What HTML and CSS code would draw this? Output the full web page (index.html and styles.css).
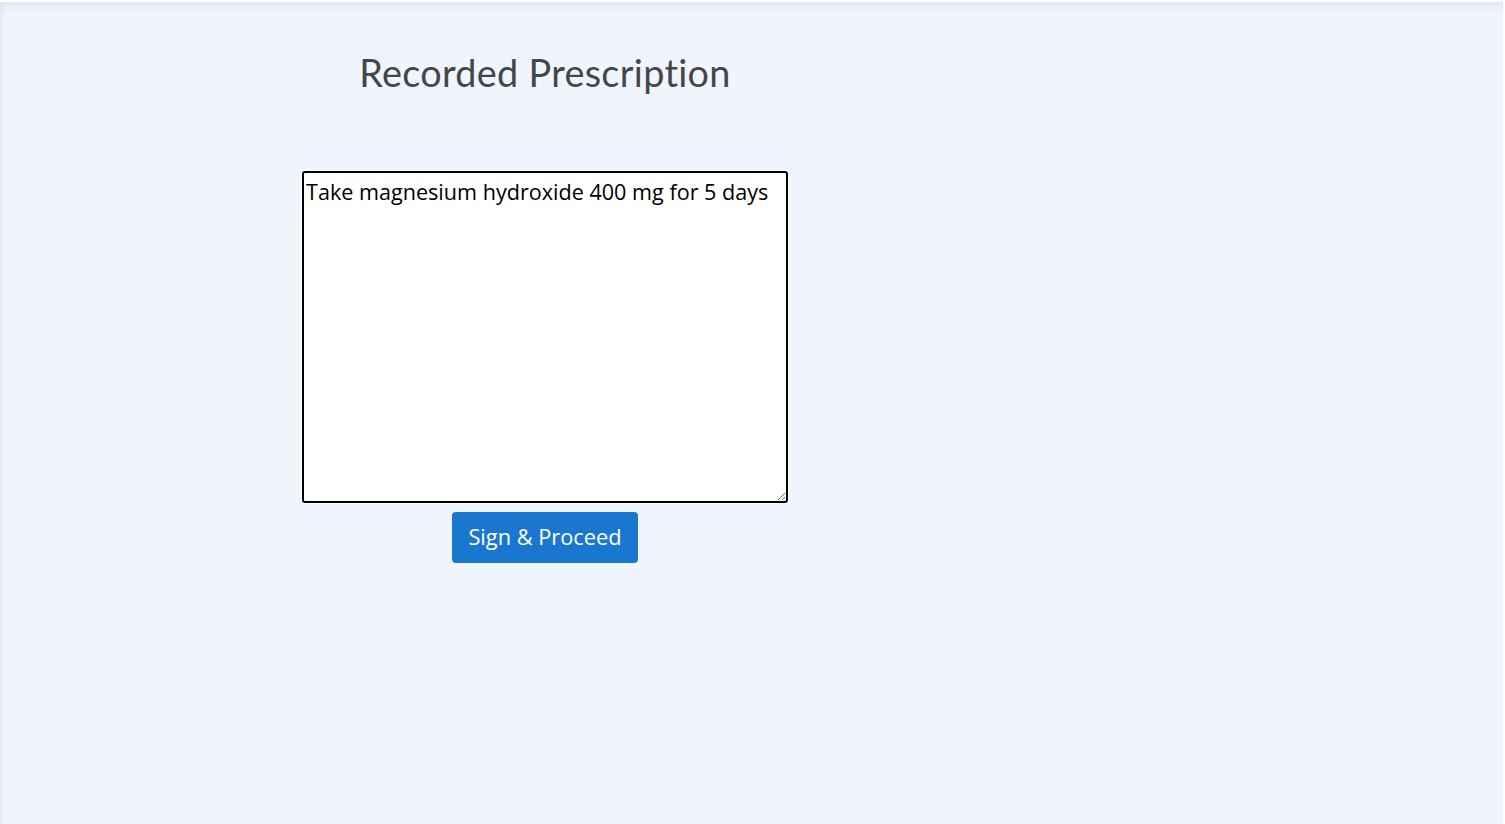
FILE: index.html
```html
<!DOCTYPE html>
<html lang="en">
<head>
<meta charset="utf-8">
<title>Recorded Prescription</title>
<link rel="stylesheet" href="styles.css">
</head>
<body>
<main class="page">
  <section class="panel">
    <h1 class="title">Recorded Prescription</h1>
    <textarea class="rx" spellcheck="false">Take magnesium hydroxide 400 mg for 5 days</textarea>
    <button class="btn" type="button">Sign &amp; Proceed</button>
  </section>
</main>
</body>
</html>
```

FILE: styles.css
```css
html, body {
  margin: 0;
  padding: 0;
  height: 100%;
  background: #ffffff;
}
body {
  padding: 2px 2px 0 0;
  box-sizing: border-box;
}
.page {
  height: 822px;
  background: #f0f5fd;
  box-shadow: inset 0 10px 14px -10px rgba(120, 140, 170, 0.25), inset 8px 0 10px -10px rgba(120, 140, 170, 0.25);
  display: flex;
}
.panel {
  width: 1090px;
  display: flex;
  flex-direction: column;
  align-items: center;
}
.title {
  margin: 49px 0 0;
  font-family: "Lato", "Nunito", sans-serif;
  font-weight: 400;
  font-size: 37.8px;
  line-height: 44px;
  color: #444649;
  letter-spacing: 0.3px;
}
.rx {
  margin-top: 76px;
  width: 486px;
  height: 332px;
  box-sizing: border-box;
  border: 2px solid #000;
  border-radius: 3px;
  box-shadow: 0 0 0 1px #ffffff;
  padding: 5px 2px 4px;
  font-family: "Open Sans", "Noto Sans", sans-serif;
  font-size: 21.6px;
  line-height: 28px;
  color: #000;
  background: #fff;
  outline: none;
}
.btn {
  margin-top: 9px;
  width: 186px;
  height: 51px;
  border: none;
  border-radius: 4px;
  background: #1a77d0;
  color: #fff;
  font-family: "Open Sans", "Noto Sans", sans-serif;
  font-size: 21.8px;
  line-height: 28px;
  padding: 0 0 2px;
  cursor: pointer;
}
```
